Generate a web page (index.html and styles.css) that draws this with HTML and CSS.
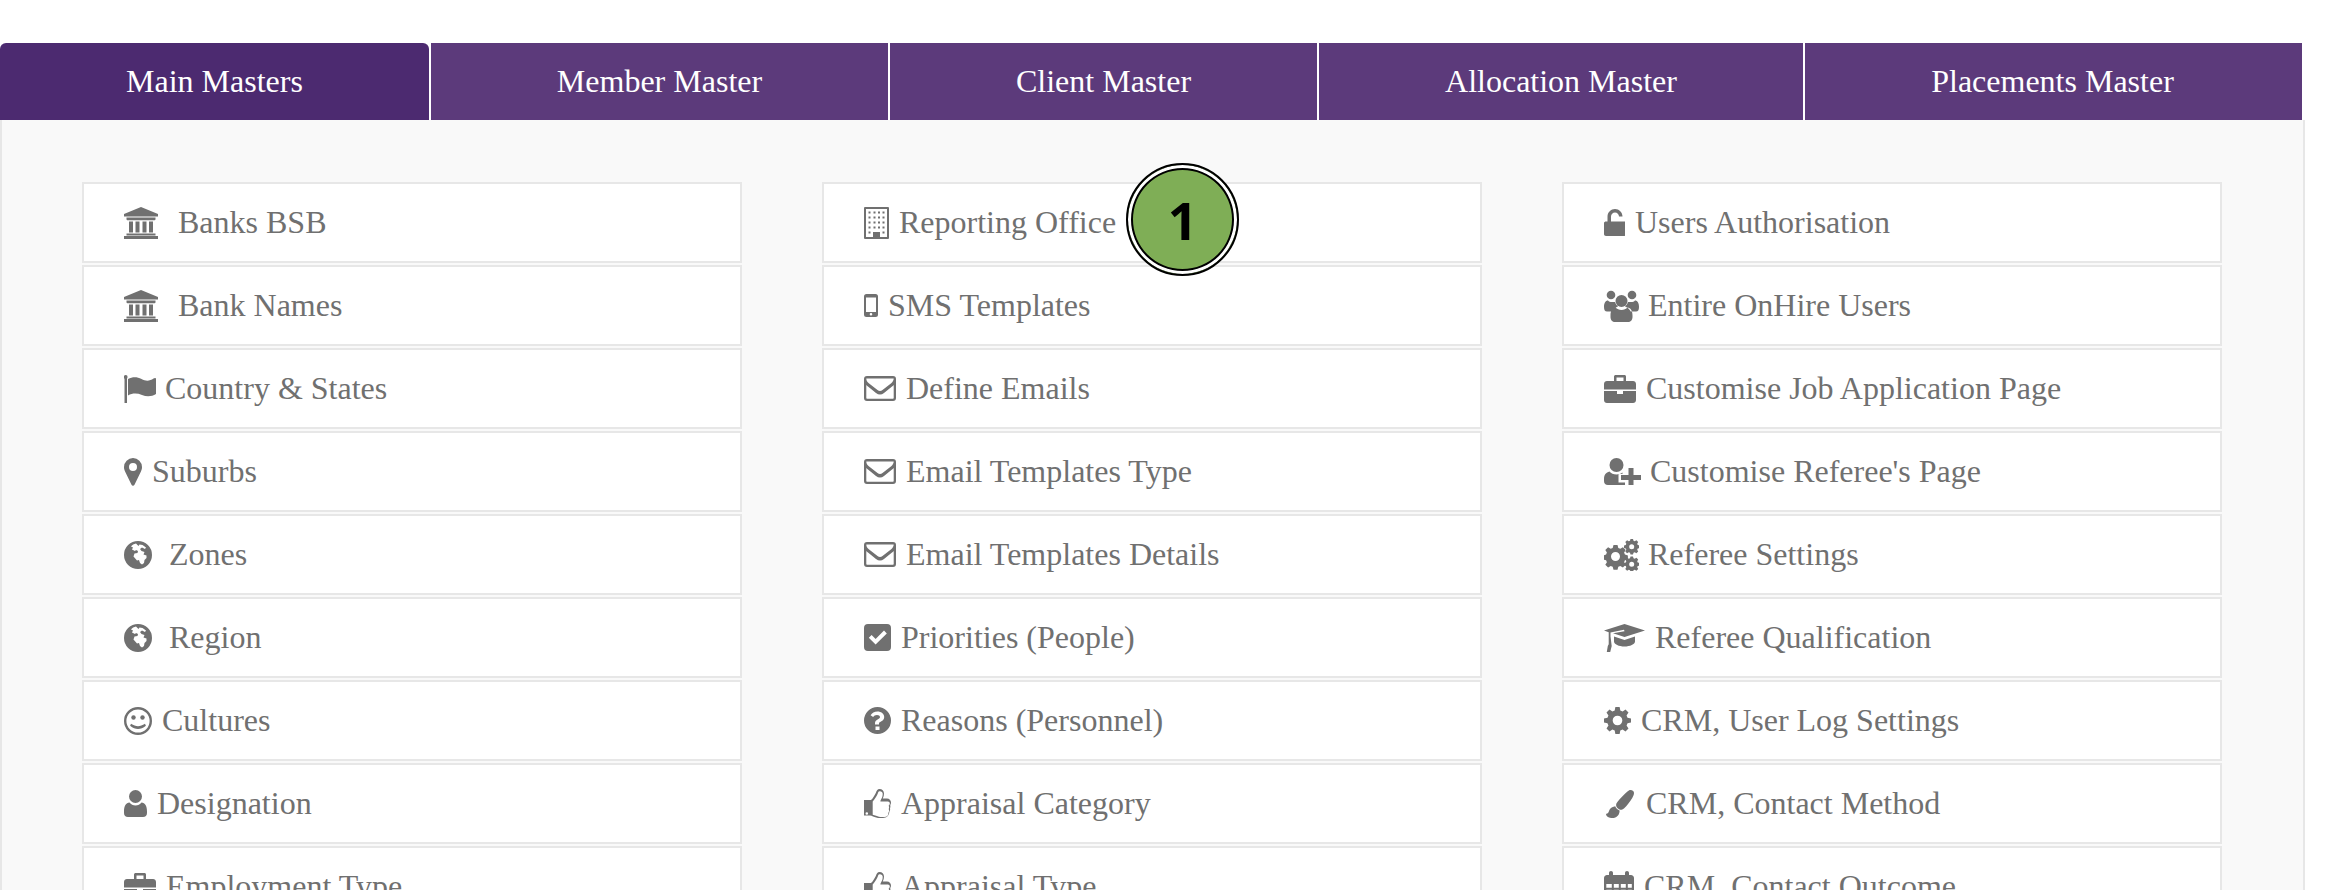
FILE: index.html
```html
<!DOCTYPE html>
<html lang="en">
<head>
  <meta charset="UTF-8" />
  <title>Masters</title>
  <link rel="stylesheet" href="styles.css">
</head>
<body>
  <svg class="defs" aria-hidden="true">
    <symbol id="i-bank" viewBox="0 0 34 32"><path d="M17 0 34 7v2.500H0V7zM2.500 10.500h29v1.800a1 1 0 0 1-1 1h-27a1 1 0 0 1-1-1zM5 14.500h4v11H5zM11.500 14.500h4v11h-4zM18.500 14.500h4v11h-4zM25 14.500h4v11h-4zM2.500 26.500h29v2h-29zM0 29h34v3H0z"/></symbol>
    <symbol id="i-flag" viewBox="0 0 32 28"><path d="M.5 2.500h2.500V28H.5z"/><circle cx="1.700" cy="2" r="1.900"/><path d="M4 4c4.500-2.500 9-2.500 13.500 0s8.500 2 12-.5c1.500-1 2.500-.5 2.500.5v15c-4 2.500-9 3-14 1s-9.500-2-14 .5z"/></symbol>
    <symbol id="i-marker" viewBox="0 0 18 28"><path fill-rule="evenodd" d="M9 0a9 9 0 0 1 9 9c0 2-.500 3.300-1.300 5L10.500 26.800a1.700 1.700 0 0 1-3 0L1.300 14C.500 12.300 0 11 0 9a9 9 0 0 1 9-9zm0 5a4 4 0 1 0 0 8 4 4 0 0 0 0-8z"/></symbol>
    <symbol id="i-globe" viewBox="0 0 28 28"><path fill-rule="evenodd" d="M14 0a14 14 0 1 1 0 28 14 14 0 0 1 0-28zM12 2.500c-2 .3-4 1.500-5 3l2 1-1 2 3 1.500 1-1 2 1-.5 2-3 .5-1 3 3.500 4 2-.5 1 3 2 1.500 2-1.500.5-3 2-2v-2.500l-3-1 1-2.500-3-1-1.500-2 2-1.500 3 1.500 1-1.500-3.500-2.500-3-.5-1 1.500z"/></symbol>
    <symbol id="i-smile" viewBox="0 0 28 28"><path fill-rule="evenodd" d="M14 0a14 14 0 1 1 0 28 14 14 0 0 1 0-28zm0 2.400a11.600 11.600 0 1 0 0 23.200 11.600 11.600 0 0 0 0-23.200z"/><circle cx="9.500" cy="10.500" r="2.200"/><circle cx="18.500" cy="10.500" r="2.200"/><path d="M7 16.800c2.600 1.700 4.800 2.400 7 2.400s4.400-.7 7-2.400l.9 1.900C19.200 21 16.600 22 14 22s-5.200-1-7.900-3.300z"/></symbol>
    <symbol id="i-user" viewBox="0 0 23 27"><circle cx="11.500" cy="6.500" r="6.500"/><path d="M5.500 12.500c1.500 2 3.500 3 6 3s4.500-1 6-3c3.500.5 5.500 3 5.500 9v1.500c0 2.500-1.500 4-4 4H4c-2.500 0-4-1.500-4-4v-1.500c0-6 2-8.500 5.500-9z"/></symbol>
    <symbol id="i-briefcase" viewBox="0 0 32 28"><path fill-rule="evenodd" d="M10 1.500C10 .6 10.800 0 11.500 0h9c.8 0 1.500.6 1.500 1.500V6h7c1.700 0 3 1.300 3 3v5.500H0V9c0-1.700 1.300-3 3-3h7zM12.500 2.500V6h7V2.500z"/><path d="M0 16h13v3h6v-3h13v9c0 1.700-1.300 3-3 3H3c-1.700 0-3-1.300-3-3z"/></symbol>
    <symbol id="i-building" viewBox="0 0 25 32"><path fill-rule="evenodd" d="M1 0h23a1 1 0 0 1 1 1v30a1 1 0 0 1-1 1H1a1 1 0 0 1-1-1V1a1 1 0 0 1 1-1zm1 2v28h7v-5h7v5h7V2z"/><path d="M4.500 4.500h2v2h-2zM9.500 4.500h2v2h-2zM14 4.500h2v2h-2zM18.500 4.500h2v2h-2zM4.500 9.500h2v2h-2zM9.500 9.500h2v2h-2zM14 9.500h2v2h-2zM18.500 9.500h2v2h-2zM4.500 14.500h2v2h-2zM9.500 14.500h2v2h-2zM14 14.500h2v2h-2zM18.500 14.500h2v2h-2zM4.500 19.500h2v2h-2zM9.500 19.500h2v2h-2zM14 19.500h2v2h-2zM18.500 19.500h2v2h-2zM4.500 24.500h2v2h-2zM18.500 24.500h2v2h-2z"/></symbol>
    <symbol id="i-mobile" viewBox="0 0 14 23"><path fill-rule="evenodd" d="M2.500 0h9A2.500 2.500 0 0 1 14 2.500v18a2.500 2.500 0 0 1-2.500 2.500h-9A2.500 2.500 0 0 1 0 20.500v-18A2.500 2.500 0 0 1 2.500 0zM2 3.500V18h10V3.500zM7 19a1.300 1.300 0 1 0 0 2.600A1.300 1.300 0 0 0 7 19z"/></symbol>
    <symbol id="i-envelope" viewBox="0 0 32 25"><path fill-rule="evenodd" d="M3 0h26a3 3 0 0 1 3 3v19a3 3 0 0 1-3 3H3a3 3 0 0 1-3-3V3a3 3 0 0 1 3-3zm-.7 2.500c0 2.200 1 3.500 2.500 4.700L13.500 14c1.600 1.300 3.400 1.300 5 0l8.700-6.800c1.500-1.200 2.500-3 2.500-4.700zM2.300 9v13c0 .4.300.7.700.7h26c.4 0 .7-.3.700-.7V9c-.7.700-1.200 1.200-2 1.800L20 17c-2.600 2-5.400 2-8 0l-7.700-6.200c-.8-.6-1.300-1.100-2-1.800z"/></symbol>
    <symbol id="i-check" viewBox="0 0 27 27"><path fill-rule="evenodd" d="M4 0h19a4 4 0 0 1 4 4v19a4 4 0 0 1-4 4H4a4 4 0 0 1-4-4V4a4 4 0 0 1 4-4zm7.600 20.600L22.800 9.400 20 6.600l-8.400 8.400-4-4-2.800 2.800z"/></symbol>
    <symbol id="i-question" viewBox="0 0 27 27"><path fill-rule="evenodd" d="M13.500 0a13.500 13.500 0 1 1 0 27 13.500 13.500 0 0 1 0-27zm-2 19.500V23h4v-3.500zm2.100-15c-3.300 0-5.600 1.400-7 3.700l2.500 1.900c.9-1.200 2-2 3.900-2 1.600 0 3 .8 3 2 0 1-.8 1.600-2 2.200-1.600.8-3 1.700-3 3.800v1.400h4v-1c0-1 1-1.500 2-2 1.900-1 3.200-2.300 3.200-4.500 0-3.300-3.300-5.500-6.600-5.500z"/></symbol>
    <symbol id="i-thumb" viewBox="0 0 27 30"><path fill-rule="evenodd" d="M15.500 0c2.600 0 4.500 2 4.500 4.600 0 1.800-.4 3.300-1.200 4.900h4.200c2.300 0 4 1.900 4 4 0 1-.3 1.900-.8 2.600.3 1 .3 2.200-.2 3.200.3 1.200.1 2.500-.7 3.500 0 3.400-2.600 6.200-6.300 6.200h-3c-2.800 0-5-.8-7-1.600-1-.4-2-.9-3-.9H0V11h7c1.800-1.200 3.700-4.800 4.800-7C12.500 2.200 13.400 0 15.500 0zm0 2.300c-1 0-1.500 1.500-1.800 2.400-1.100 2.300-3.100 6-5 7.700v13.300c1 .1 2.300.6 3.400 1 1.900.7 3.800 1.300 5.500 1.300h2.800c2.300 0 4.100-1.500 4-4-.1-.4.8-1.400.7-2.700-.1-.7-.5-1.100-.3-1.500.5-.9.4-2-.2-3 .9-.8 1.200-1.500 1.200-2.500s-.8-1.900-1.900-1.900h-7.500c.4-2.400 2.300-3.300 2.300-7.700 0-1.500-1.300-2.400-2.700-2.400z"/><path d="M1.500 24.500a1.300 1.300 0 1 0 2.600 0 1.300 1.300 0 0 0-2.600 0z" fill="#fff"/></symbol>
    <symbol id="i-unlock" viewBox="0 0 21 27"><path d="M2 12.500h19c.7 0 1 .4 1 1V25c0 1.200-.8 2-2 2H2c-1.200 0-2-.8-2-2V14c0-1 1-1.500 2-1.500z"/><path d="M3.500 13V7.500C3.500 3.300 7 0 11 0s7.500 3.300 7.500 7.500H15C15 5.200 13.200 3.500 11 3.500S7 5.200 7 7.500V13z"/></symbol>
    <symbol id="i-users" viewBox="0 0 35 32"><circle cx="17.500" cy="11" r="6"/><circle cx="7" cy="5" r="4.300"/><circle cx="28" cy="5" r="4.300"/><path d="M0 17c0-4 1.500-6.500 4-6.500 1 1 2 1.500 4 1.500h3c.7 2 2 3.500 3 4.500-3 1-5 3.500-5.700 5H3c-2 0-3-1.500-3-4.500zM35 17c0-4-1.500-6.500-4-6.500-1 1-2 1.500-4 1.500h-3c-.7 2-2 3.500-3 4.500 3 1 5 3.500 5.700 5H32c2 0 3-1.500 3-4.500zM11.500 17.500c1.500 1.500 3.500 2.500 6 2.500s4.500-1 6-2.500c3 .3 5 3 5 8v1.500c0 3-2 5-4.500 5H11c-2.500 0-4.500-2-4.500-5v-1.500c0-5 2-7.700 5-8z"/></symbol>
    <symbol id="i-userplus" viewBox="0 0 37 27"><circle cx="12.500" cy="7" r="7"/><path d="M5.500 13.500c1.500 2 4 3 7 3 2.500 0 4.500-.7 6-2v1.500h-4v8.500h6.500V27H4c-2.500 0-4-1.500-4-4v-1.500c0-5 2-7 5.500-8z"/><path d="M24.500 10h5v7H37v5h-7.500v5h-5v-5H17v-5h7.500z"/></symbol>
    <symbol id="i-gears" viewBox="0 0 35 32"><path fill-rule="evenodd" d="M9.500 6h4l.8 3 2 .8 2.600-1.600 2.800 2.800-1.600 2.600.8 2 3 .8v4l-3 .8-.8 2 1.600 2.600-2.800 2.800-2.600-1.600-2 .8-.8 3h-4l-.8-3-2-.8-2.600 1.600-2.800-2.800 1.600-2.600-.8-2-3-.8v-4l3-.8.8-2-1.600-2.600 2.800-2.800 2.600 1.600 2-.8zm2 7a4.500 4.500 0 1 0 0 9 4.500 4.500 0 0 0 0-9z"/><path fill-rule="evenodd" d="M26.500 0h2.500l.5 1.800 1.200.5 1.700-1 1.800 1.800-1 1.700.5 1.200 1.800.5v2.500l-1.800.5-.5 1.200 1 1.700-1.800 1.800-1.700-1-1.200.5-.5 1.800h-2.500l-.5-1.800-1.200-.5-1.700 1-1.800-1.800 1-1.700-.5-1.200-1.800-.5V6.500l1.800-.5.5-1.200-1-1.700 1.800-1.800 1.700 1 1.200-.5zm1.200 5.200a2.500 2.500 0 1 0 0 5 2.500 2.500 0 0 0 0-5zM26.500 17.500h2.500l.5 1.800 1.200.5 1.700-1 1.800 1.800-1 1.700.5 1.200 1.800.5v2.500l-1.800.5-.5 1.200 1 1.700-1.800 1.800-1.700-1-1.200.5-.5 1.800h-2.500l-.5-1.800-1.200-.5-1.700 1-1.800-1.800 1-1.700-.5-1.200-1.800-.5V24l1.800-.5.5-1.200-1-1.700 1.800-1.800 1.700 1 1.200-.5zm1.200 5.200a2.500 2.500 0 1 0 0 5 2.500 2.500 0 0 0 0-5z"/></symbol>
    <symbol id="i-cap" viewBox="0 0 41 28"><path d="M20.500 0 41 6.500 20.500 13 9 9.300 20.500 7.200 20 5.800 6.500 8.500v3.700l1.200 9.800-1.500 6H2.800l1-6 .9-1.800V8.300L0 6.500z"/><path d="M10 12.500 20.500 16l10.500-3.500v5c0 2.800-5 5-10.500 5S10 20.300 10 17.500z"/></symbol>
    <symbol id="i-cog" viewBox="0 0 28 28"><path fill-rule="evenodd" d="M11.800 0h4.400l.7 3.600 2.400 1 3-2 3.100 3.100-2 3 1 2.400 3.600.7v4.400l-3.600.7-1 2.400 2 3-3.100 3.100-3-2-2.400 1-.7 3.600h-4.400l-.7-3.600-2.400-1-3 2-3.100-3.100 2-3-1-2.400L0 16.200v-4.400l3.600-.7 1-2.400-2-3 3.100-3.100 3 2 2.400-1zM14 9a5 5 0 1 0 0 10 5 5 0 0 0 0-10z"/></symbol>
    <symbol id="i-brush" viewBox="0 0 32 32"><path d="M28 0c2.500 0 4 1.500 4 3.500 0 2-1 3.700-2 5.500-2.500 4-6 9-9.500 12-1.200 1-2.500 1.600-3.500 1.600-2.500 0-5.500-3-5.500-5.500 0-1 .5-2.300 1.500-3.500C16 10 21 5 24.500 1.800 25.500.8 26.800 0 28 0zM10.500 18.500c1 2.300 3 4.200 5 4.800.300 4.500-3 8.700-8.500 8.700-3 0-7-1.500-7-5 1.500 0 2.500-.5 3-2 1-3.500 3.500-6 7.500-6.500z"/></symbol>
    <symbol id="i-calendar" viewBox="0 0 30 32"><path fill-rule="evenodd" d="M7 0c1.200 0 2 .8 2 2v2h12V2c0-1.200.8-2 2-2s2 .8 2 2v2h2c1.600 0 3 1.400 3 3v22c0 1.600-1.400 3-3 3H3c-1.600 0-3-1.400-3-3V7c0-1.600 1.400-3 3-3h2V2c0-1.200.8-2 2-2zM2.300 13v3.800h5.500V13zm7.500 0v3.800h5V13zm7 0v3.800h5V13zm7 0v3.800h4V13zM2.300 18.800v4h5.500v-4zm7.500 0v4h5v-4zm7 0v4h5v-4zm7 0v4h4v-4zM2.300 24.800V29c0 .4.300.7.700.7h4.800v-4.900zm7.500 0v4.900h5v-4.900zm7 0v4.900h5v-4.900zm7 0v4.900H27c.4 0 .7-.3.700-.7v-4.200z"/></symbol>
  </svg>

  <nav class="tabs">
    <a class="tab tab-main active">Main Masters</a>
    <a class="tab tab-member">Member Master</a>
    <a class="tab tab-client">Client Master</a>
    <a class="tab tab-alloc">Allocation Master</a>
    <a class="tab tab-place">Placements Master</a>
  </nav>

  <section class="panel">
    <div class="col">
      <a class="item"><svg class="ico w-bank"><use href="#i-bank"/></svg>Banks BSB</a>
      <a class="item"><svg class="ico w-bank"><use href="#i-bank"/></svg>Bank Names</a>
      <a class="item"><svg class="ico w-flag"><use href="#i-flag"/></svg>Country &amp; States</a>
      <a class="item"><svg class="ico w-marker"><use href="#i-marker"/></svg>Suburbs</a>
      <a class="item"><svg class="ico w-globe"><use href="#i-globe"/></svg>Zones</a>
      <a class="item"><svg class="ico w-globe"><use href="#i-globe"/></svg>Region</a>
      <a class="item"><svg class="ico w-smile"><use href="#i-smile"/></svg>Cultures</a>
      <a class="item"><svg class="ico w-user"><use href="#i-user"/></svg>Designation</a>
      <a class="item"><svg class="ico w-briefcase"><use href="#i-briefcase"/></svg>Employment Type</a>
    </div>
    <div class="col">
      <a class="item"><svg class="ico w-building"><use href="#i-building"/></svg>Reporting Office</a>
      <a class="item"><svg class="ico w-mobile"><use href="#i-mobile"/></svg>SMS Templates</a>
      <a class="item"><svg class="ico w-envelope"><use href="#i-envelope"/></svg>Define Emails</a>
      <a class="item"><svg class="ico w-envelope"><use href="#i-envelope"/></svg>Email Templates Type</a>
      <a class="item"><svg class="ico w-envelope"><use href="#i-envelope"/></svg>Email Templates Details</a>
      <a class="item"><svg class="ico w-square"><use href="#i-check"/></svg>Priorities (People)</a>
      <a class="item"><svg class="ico w-square"><use href="#i-question"/></svg>Reasons (Personnel)</a>
      <a class="item"><svg class="ico w-thumb"><use href="#i-thumb"/></svg>Appraisal Category</a>
      <a class="item"><svg class="ico w-thumb"><use href="#i-thumb"/></svg>Appraisal Type</a>
    </div>
    <div class="col">
      <a class="item"><svg class="ico w-unlock"><use href="#i-unlock"/></svg>Users Authorisation</a>
      <a class="item"><svg class="ico w-users"><use href="#i-users"/></svg>Entire OnHire Users</a>
      <a class="item"><svg class="ico w-briefcase"><use href="#i-briefcase"/></svg>Customise Job Application Page</a>
      <a class="item"><svg class="ico w-userplus"><use href="#i-userplus"/></svg>Customise Referee's Page</a>
      <a class="item"><svg class="ico w-users"><use href="#i-gears"/></svg>Referee Settings</a>
      <a class="item"><svg class="ico w-cap"><use href="#i-cap"/></svg>Referee Qualification</a>
      <a class="item"><svg class="ico w-square"><use href="#i-cog"/></svg>CRM, User Log Settings</a>
      <a class="item"><svg class="ico w-briefcase"><use href="#i-brush"/></svg>CRM, Contact Method</a>
      <a class="item"><svg class="ico w-calendar"><use href="#i-calendar"/></svg>CRM, Contact Outcome</a>
    </div>
  </section>

  <div class="badge"><span class="badge-num">1</span></div>
</body>
</html>
```

FILE: styles.css
```css
* {
  box-sizing: border-box;
}

html, body {
  height: 100%;
}

body {
  margin: 0;
  padding-top: 43px;
  width: 2305px;
  height: 890px;
  overflow: hidden;
  background: #fff;
  font-family: "Liberation Serif", serif;
  font-size: 32px;
  color: #707070;
  position: relative;
}

.defs {
  display: none;
}

/* top tabs */
.tabs {
  display: flex;
  gap: 2px;
  width: 2302px;
  height: 77px;
}

.tab {
  display: flex;
  align-items: center;
  justify-content: center;
  background: #5c3a7b;
  color: #fff;
}

.tab.active {
  background: #4c2a70;
  border-radius: 6px 6px 0 0;
}

.tab-main { width: 429px; }
.tab-member { width: 457px; }
.tab-client { width: 427px; }
.tab-alloc { width: 484px; }
.tab-place { flex: 1; padding-right: 2px; }

/* panel with three columns */
.panel {
  display: flex;
  gap: 80px;
  height: 800px;
  padding: 62px 80px 0;
  background: #f9f9f9;
  border: 2px solid #e7e7e7;
  border-top: 0;
}

.col {
  flex: 0 0 660px;
  display: flex;
  flex-direction: column;
  gap: 2px;
}

.item {
  display: flex;
  align-items: center;
  flex: 0 0 81px;
  padding-left: 40px;
  background: #fff;
  border: 2px solid #e7e7e7;
}

.ico {
  flex: none;
  margin-right: 10px;
  fill: #707070;
}

.w-bank { width: 34px; height: 32px; margin-right: 20px; }
.w-flag { width: 32px; height: 28px; margin-right: 9px; }
.w-marker { width: 18px; height: 28px; }
.w-globe { width: 28px; height: 28px; margin-right: 17px; }
.w-smile { width: 28px; height: 28px; }
.w-user { width: 23px; height: 27px; }
.w-briefcase { width: 32px; height: 28px; }
.w-building { width: 25px; height: 32px; }
.w-mobile { width: 14px; height: 23px; }
.w-envelope { width: 32px; height: 25px; }
.w-square { width: 27px; height: 27px; }
.w-thumb { width: 27px; height: 30px; }
.w-unlock { width: 21px; height: 27px; }
.w-users { width: 35px; height: 32px; margin-right: 9px; }
.w-userplus { width: 37px; height: 27px; margin-right: 9px; }
.w-cap { width: 41px; height: 28px; }
.w-calendar { width: 30px; height: 32px; }

/* numbered marker over the list */
.badge {
  position: absolute;
  left: 1126px;
  top: 163px;
  width: 113px;
  height: 113px;
  display: flex;
  align-items: center;
  justify-content: center;
  border-radius: 50%;
  background: #7fae56;
  border: 2px solid #000;
  box-shadow: inset 0 0 0 3px #fff, inset 0 0 0 5px #000;
}

.badge-num {
  font-family: "Open Sans", sans-serif;
  font-weight: 700;
  font-size: 52px;
  line-height: 1;
  color: #000;
}
```
